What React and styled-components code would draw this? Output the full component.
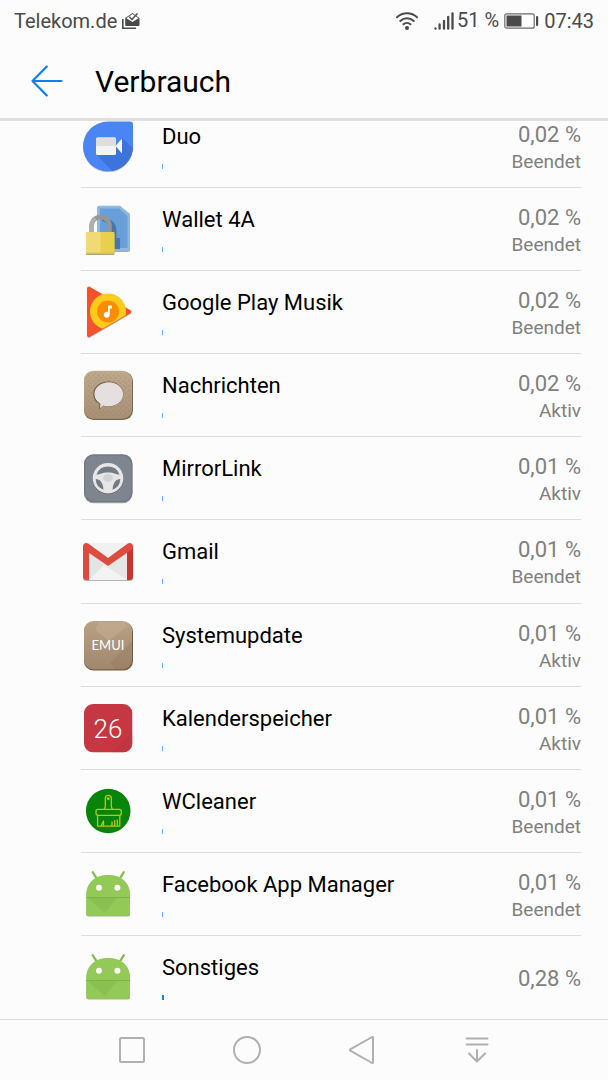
import React from 'react';
import styled, { createGlobalStyle } from 'styled-components';

const GlobalStyle = createGlobalStyle`
  * {
    box-sizing: border-box;
  }
  body {
    margin: 0;
    background: #fcfcfc;
    font-family: Roboto, 'Liberation Sans', sans-serif;
  }
`;

/* ---------- app icons ---------- */

const DuoIcon = () => (
  <AppIcon viewBox="0 0 52 52">
    <path d="M26 2.400H48a3 3 0 0 1 3 3V27a25 25 0 1 1-25-24.600z" fill="#c9cbd0" />
    <path d="M26 1.500H48a3 3 0 0 1 3 3V26.500a25 25 0 1 1-25-25z" fill="#4a86f3" />
    <path d="M14.500 34.500L30 51a25 25 0 0 0 21-23L39.500 17.500L34 30z" fill="#3c74dc" />
    <rect x="14" y="17.500" width="20" height="17.500" rx="1.500" fill="#f4f4f4" />
    <path d="M15.500 17.500h17a1.500 1.500 0 0 1 1.500 1.500v7H14v-7a1.500 1.500 0 0 1 1.500-1.500z" fill="#dedede" />
    <path d="M33.500 26l6.500-7.500v15z" fill="#f4f4f4" />
  </AppIcon>
);

const WalletIcon = () => (
  <AppIcon viewBox="0 0 52 52">
    <path d="M17 3.500h21.500L48 12v35a2 2 0 0 1-2 2H17a2 2 0 0 1-2-2V5.500a2 2 0 0 1 2-2z" fill="#a9a9a9" />
    <path d="M17 2.700h21L48 11v35a2 2 0 0 1-2 2H17a2 2 0 0 1-2-2V4.700a2 2 0 0 1 2-2z" fill="#8bb9e4" />
    <path d="M18 5.500h19L45.500 13v32H18z" fill="#689fd8" />
    <path d="M20 16c8-2 14.500 4 14.500 12v7H38v11H20z" fill="#4a76a5" />
    <path d="M20 18a6.500 6.500 0 0 1 6 6v5h-8V18z" fill="#689fd8" />
    <path d="M9.500 30v-7a9 9 0 0 1 18 0v7" fill="none" stroke="#969696" strokeWidth="4.500" />
    <path d="M9.500 29v-6a9 9 0 0 1 4-7.400" fill="none" stroke="#b0b0b0" strokeWidth="4" />
    <rect x="4" y="30" width="28.500" height="22" rx="1" fill="#aaa47e" />
    <rect x="4" y="29" width="28.500" height="22" rx="1" fill="#e8d04e" />
    <path d="M5 29h13.500v22H5a1 1 0 0 1-1-1V30a1 1 0 0 1 1-1z" fill="#f0da78" />
    <path d="M4 49.500h28.500v.7a1 1 0 0 1-1 .8H5a1 1 0 0 1-1-.8z" fill="#d9c162" />
  </AppIcon>
);

const PlayMusicIcon = () => (
  <AppIcon viewBox="0 0 52 52">
    <defs>
      <clipPath id="music-edge">
        <path d="M0 0H52V24.500L4.700 52z" />
      </clipPath>
    </defs>
    <path d="M5 3a2 2 0 0 1 3-1.600L48.500 25.500a1.800 1.800 0 0 1 0 2.500L8 51.600a2 2 0 0 1-3-1.600z" fill="#b9b4b2" />
    <path d="M5 2.500A2 2 0 0 1 8 .9L48.500 24.300a1.900 1.900 0 0 1 0 3L8 50.700a2 2 0 0 1-3-1.600z" fill="#f5512c" />
    <g clipPath="url(#music-edge)">
      <circle cx="26" cy="25.500" r="18" fill="#fdcb1b" />
    </g>
    <circle cx="26" cy="25.500" r="11" fill="#fb8c04" />
    <path d="M26 19.500h4v3h-2.200v6.200a3 3 0 1 1-1.800-2.700z" fill="#fff" />
  </AppIcon>
);

const MessagesIcon = () => (
  <AppIcon viewBox="0 0 52 52">
    <defs>
      <linearGradient id="leather" x1="0" y1="0" x2="0" y2="1">
        <stop offset="0" stopColor="#bfa98d" />
        <stop offset="1" stopColor="#a68f74" />
      </linearGradient>
      <pattern id="stitch" width="5" height="5" patternUnits="userSpaceOnUse">
        <path d="M1 1l1.500 1.500M4.500 3L3.500 4.500" stroke="#947c61" strokeWidth=".5" />
      </pattern>
    </defs>
    <rect x="2" y="2.500" width="49" height="48.500" rx="9.500" fill="#7d674f" />
    <rect x="2" y="1.800" width="48" height="48" rx="9.500" fill="url(#leather)" />
    <rect x="4" y="4" width="44" height="44" rx="7" fill="url(#stitch)" />
    <path d="M26.300 12.500c8.500 0 15 5.500 15 12.500s-6.500 12.500-15 12.500c-2 0-3.800-.3-5.400-.8L16.800 40.500l.8-5.300C13.500 33 11.300 29.300 11.300 25c0-7 6.500-12.500 15-12.500z" fill="#6d5945" />
    <path d="M26.800 13.300c8 0 14.300 5.200 14.300 12s-6.300 12-14.300 12c-2 0-3.900-.3-5.600-.9L18 39.300l.4-4.600c-3.800-2.200-6-5.500-6-9.400 0-6.800 6.400-12 14.400-12z" fill="#e5dfdf" />
  </AppIcon>
);

const MirrorLinkIcon = () => (
  <AppIcon viewBox="0 0 52 52">
    <rect x="2" y="3" width="48.500" height="48.300" rx="9.500" fill="#a6a8ab" />
    <rect x="2" y="2.300" width="48.500" height="48" rx="9.500" fill="#737982" />
    <rect x="3.500" y="3.800" width="45.500" height="45" rx="8" fill="#7f858e" />
    <circle cx="26" cy="27" r="15.300" fill="#555b63" />
    <circle cx="26" cy="26.300" r="15.300" fill="#e6e6e6" />
    <path d="M14.500 22.500a12.300 12.300 0 0 1 23 0c-3.500.2-4.500-2-11.500-2s-8 2.200-11.500 2z" fill="#747a83" />
    <path d="M13.700 27c4.300 0 7.300 3.500 7.800 10.800a12.200 12.200 0 0 1-7.800-10.800z" fill="#747a83" />
    <path d="M38.300 27c-4.300 0-7.300 3.500-7.800 10.800a12.200 12.200 0 0 0 7.800-10.800z" fill="#747a83" />
    <ellipse cx="26" cy="26" rx="5" ry="3.800" fill="#d2d2d2" />
  </AppIcon>
);

const GmailIcon = () => (
  <AppIcon viewBox="0 0 52 52">
    <rect x="1" y="9" width="50" height="37" rx="3" fill="#b5b5b5" />
    <rect x="1" y="8" width="50" height="37" rx="3" fill="#ececec" />
    <path d="M7 15v30l15-15z" fill="#e4e4e4" />
    <path d="M7 45l15-15 4 3 4-2 15 14z" fill="#f3f3f3" />
    <path d="M22 30l23 15V17L26 33z" fill="#e6e6e6" />
    <path d="M6 8h40L26 22.500z" fill="#f1f1f1" />
    <path d="M1 11h6v34H4a3 3 0 0 1-3-3z" fill="#dc4b3f" />
    <path d="M45 11h6v31a3 3 0 0 1-3 3h-3z" fill="#c5372d" />
    <path d="M1 11.500C1 8.300 4.200 7 6.500 8.800L26 23 45.500 8.800C47.800 7 51 8.300 51 11.500c0 1.700-.6 2.600-1.800 3.500L26 31 2.800 15C1.600 14.100 1 13.200 1 11.500z" fill="#dd4b40" />
  </AppIcon>
);

const EmuiIcon = () => (
  <AppIcon viewBox="0 0 52 52">
    <defs>
      <linearGradient id="bronze" x1="0" y1="0" x2="0" y2="1">
        <stop offset="0" stopColor="#b9a184" />
        <stop offset="1" stopColor="#a1886d" />
      </linearGradient>
    </defs>
    <rect x="2" y="3" width="49" height="48.500" rx="9.500" fill="#745b43" />
    <rect x="2" y="2" width="48" height="48.300" rx="9.500" fill="url(#bronze)" />
    <path d="M17 3l-4 8 14 11L45 7l-3-4z" fill="#c6b196" opacity=".5" />
    <path d="M50 22L28 44l5 6h9a8 8 0 0 0 8-8z" fill="#8e745b" opacity=".3" />
    <IconText x="26" y="31.300" $size={13} $weight={400} $family="Lato">
      EMUI
    </IconText>
  </AppIcon>
);

const CalendarIcon = () => (
  <AppIcon viewBox="0 0 52 52">
    <rect x="2" y="2" width="48.300" height="48.300" rx="9" fill="#c53742" />
    <path d="M50 30L30 50.300h12a8.300 8.300 0 0 0 8.300-8.300z" fill="#ba323d" opacity=".4" />
    <IconText x="26" y="35.600" $size={26} $weight={300} $family="Roboto">
      26
    </IconText>
  </AppIcon>
);

const CleanerIcon = () => (
  <AppIcon viewBox="0 0 52 52">
    <circle cx="26.200" cy="26" r="22.300" fill="#078409" />
    <g fill="none" stroke="#b9c80c" strokeWidth="1.300" strokeLinejoin="round">
      <path d="M23.300 21.500V13.300a3 3 0 0 1 6 0v8.200l1 2.800M23.300 21.500l-1 2.800" />
      <circle cx="26.300" cy="13.800" r=".8" />
      <rect x="14" y="24.300" width="25.300" height="6" rx="2" />
      <path d="M15.600 30.300v10.800h22.200V30.300M19 41l2.500-5v5M30 41v-4.500M32.700 41v-6M35.300 41v-6.500" />
    </g>
  </AppIcon>
);

const AndroidIcon = () => (
  <AppIcon viewBox="0 0 52 52">
    <path d="M10.800 4.300l4.700 7.500M41.700 4.300L37 11.800" stroke="#8abd55" strokeWidth="2.400" strokeLinecap="round" />
    <path d="M4.300 28C4.300 15 13.500 7.800 26.200 7.800S48 15 48 28v18.500a2 2 0 0 1-2 2H6.300a2 2 0 0 1-2-2z" fill="#a5b193" />
    <path d="M4.300 27C4.300 14.500 13.500 7 26.200 7S48 14.500 48 27v18.700a2 2 0 0 1-2 2H6.300a2 2 0 0 1-2-2z" fill="#93c957" />
    <path d="M5 29.500L23 45l12-15.500z" fill="#82b64b" opacity=".5" />
    <path d="M4.300 29.500H48" stroke="#7fb14a" strokeWidth="1.200" />
    <circle cx="17" cy="19.700" r="3" fill="#fafafa" />
    <circle cx="35.400" cy="19.700" r="3" fill="#fafafa" />
  </AppIcon>
);

const apps = [
  { name: 'Duo', Icon: DuoIcon, share: '0,02 %', state: 'Beendet' },
  { name: 'Wallet 4A', Icon: WalletIcon, share: '0,02 %', state: 'Beendet' },
  { name: 'Google Play Musik', Icon: PlayMusicIcon, share: '0,02 %', state: 'Beendet' },
  { name: 'Nachrichten', Icon: MessagesIcon, share: '0,02 %', state: 'Aktiv' },
  { name: 'MirrorLink', Icon: MirrorLinkIcon, share: '0,01 %', state: 'Aktiv' },
  { name: 'Gmail', Icon: GmailIcon, share: '0,01 %', state: 'Beendet' },
  { name: 'Systemupdate', Icon: EmuiIcon, share: '0,01 %', state: 'Aktiv' },
  { name: 'Kalenderspeicher', Icon: CalendarIcon, share: '0,01 %', state: 'Aktiv' },
  { name: 'WCleaner', Icon: CleanerIcon, share: '0,01 %', state: 'Beendet' },
  { name: 'Facebook App Manager', Icon: AndroidIcon, share: '0,01 %', state: 'Beendet' },
  { name: 'Sonstiges', Icon: AndroidIcon, share: '0,28 %', strong: true },
];

const StatusBar = () => (
  <Status>
    <Carrier>Telekom.de</Carrier>
    <svg width="18" height="18" viewBox="0 0 18 18">
      <path d="M.8 7v9.200H14" fill="none" stroke="#4a4a4a" strokeWidth="1.600" />
      <path d="M3.200 6l7.300-5 7 5v7a1 1 0 0 1-1 1H4.200a1 1 0 0 1-1-1z" fill="#4a4a4a" />
      <path d="M4.300 6.300l6.200-4.300 6 4.300-6 3.700z" fill="#fcfcfc" />
      <path d="M7.300 4.800l2.600 2.600L15.500 1.500" fill="none" stroke="#4a4a4a" strokeWidth="1.400" />
    </svg>
    <Spacer />
    <svg width="22" height="18" viewBox="0 0 22 18" fill="none" stroke="#4a4a4a" strokeWidth="2" strokeLinecap="round">
      <path d="M1 5.200a14.500 14.500 0 0 1 20 0M4.300 9a9.800 9.800 0 0 1 13.400 0M7.500 12.300a5.200 5.200 0 0 1 7 0" />
      <circle cx="11" cy="16" r="1" fill="#4a4a4a" />
    </svg>
    <Signal width="20" height="18" viewBox="0 0 20 18" stroke="#4a4a4a" strokeWidth="2.300" strokeLinecap="round">
      <path d="M1.500 16.300V16.700M5.600 12.500V16.700M10 9V16.700M14.200 5V16.700M18.500 1.300V16.700" />
    </Signal>
    <Charge>51 %</Charge>
    <svg width="35" height="16" viewBox="0 0 35 16">
      <rect x=".8" y=".8" width="29.400" height="14.400" rx="2" fill="none" stroke="#6a6a6a" strokeWidth="1.200" />
      <path d="M2.500 2.500h15v11h-15z" fill="#4a4a4a" />
      <rect x="32" y="3" width="2.200" height="10" rx="1" fill="#4a4a4a" />
    </svg>
    <Clock>07:43</Clock>
  </Status>
);

const App = () => (
  <Screen>
    <GlobalStyle />
    <StatusBar />
    <Header>
      <BackButton aria-label="Zurück">
        <svg width="32" height="32" viewBox="0 0 32 32" fill="none" stroke="#0a80f8" strokeWidth="2.200" strokeLinecap="round" strokeLinejoin="round">
          <path d="M15.800 1.500L1.500 16l14.300 14.500M1.500 16H30.500" />
        </svg>
      </BackButton>
      <Title>Verbrauch</Title>
    </Header>
    <Viewport>
      <List>
        {apps.map(({ name, Icon, share, state, strong }) => (
          <Row key={name}>
            <Icon />
            <Info>
              <Name>{name}</Name>
              <Bar $strong={strong} />
            </Info>
            <Usage>
              <Share>{share}</Share>
              {state && <State>{state}</State>}
            </Usage>
          </Row>
        ))}
      </List>
    </Viewport>
    <NavBar>
      <NavButton aria-label="Letzte Apps">
        <NavIcon viewBox="0 0 30 30">
          <rect x="3" y="3" width="24" height="24" rx="1" />
        </NavIcon>
      </NavButton>
      <NavButton aria-label="Startseite">
        <NavIcon viewBox="0 0 30 30">
          <circle cx="15" cy="15" r="13" />
        </NavIcon>
      </NavButton>
      <NavButton aria-label="Zurück">
        <NavIcon viewBox="0 0 30 30">
          <path d="M26 2.500V27.500a.6.600 0 0 1-.9.500L3.200 15.600a.7.700 0 0 1 0-1.200L25.100 2a.6.600 0 0 1 .9.500z" />
        </NavIcon>
      </NavButton>
      <NavButton aria-label="Benachrichtigungen">
        <NavIcon viewBox="0 0 30 30">
          <path d="M4.500 3.500h21M4.500 9.500h21M15 15v11.500M7 18.500l8 8 8-8" />
        </NavIcon>
      </NavButton>
    </NavBar>
  </Screen>
);

export default App;

const Screen = styled.div`
  display: flex;
  flex-direction: column;
  min-height: 100vh;
`;

const Status = styled.div`
  display: flex;
  align-items: center;
  height: 42px;
  padding: 0 14px;
  color: #4a4a4a;
  font-size: 20px;
  line-height: 24px;
`;

const Carrier = styled.span`
  margin-right: 5px;
`;

const Spacer = styled.span`
  flex: 1;
`;

const Signal = styled.svg`
  margin: 0 3px 0 16px;
`;

const Charge = styled.span`
  margin-right: 5px;
  padding-bottom: 2px;
`;

const Clock = styled.span`
  margin-left: 5px;
`;

const Header = styled.header`
  display: flex;
  align-items: center;
  height: 79px;
  padding: 2px 31px 0;
  border-bottom: 3px solid #e0e0e0;
`;

const BackButton = styled.button`
  display: flex;
  margin-right: 32px;
  padding: 0;
  border: 0;
  background: none;
  cursor: pointer;
`;

const Title = styled.h1`
  margin: 0;
  padding-top: 2px;
  font-size: 30px;
  font-weight: 400;
  line-height: 36px;
`;

const Viewport = styled.main`
  display: flex;
  flex: 1;
  overflow: hidden;
`;

/* the list is scrolled a little way under the header */
const List = styled.ul`
  display: grid;
  grid-auto-rows: minmax(83px, 1fr);
  flex: 1;
  margin: -16px 27px 0 81px;
  padding: 0;
  list-style: none;
`;

const Row = styled.li`
  display: flex;
  align-items: center;
  border-bottom: 1px solid #dcdcdc;

  &:last-child {
    border-bottom: 0;
  }
`;

const AppIcon = styled.svg`
  width: 52px;
  height: 52px;
  margin: 0 28px 0 1px;
`;

const IconText = styled.text`
  fill: #fff;
  font-family: ${props => props.$family}, sans-serif;
  font-size: ${props => props.$size}px;
  font-weight: ${props => props.$weight};
  text-anchor: middle;
`;

const Info = styled.div`
  flex: 1;
`;

const Name = styled.div`
  margin-bottom: 13px;
  color: #000;
  font-size: 22px;
  line-height: 28px;
`;

const Bar = styled.div`
  width: ${props => (props.$strong ? 2 : 1)}px;
  height: 5px;
  background: ${props => (props.$strong ? '#0a84ff' : '#62b2ff')};
`;

const Usage = styled.div`
  padding-top: 4px;
  color: #808080;
  text-align: right;
`;

const Share = styled.div`
  font-size: 22px;
  line-height: 28px;
`;

const State = styled.div`
  font-size: 19px;
  line-height: 26px;
`;

const NavBar = styled.nav`
  display: grid;
  grid-template-columns: repeat(4, 1fr);
  height: 61px;
  padding: 0 74px;
  border-top: 1px solid #dcdcdc;
`;

const NavButton = styled.button`
  display: flex;
  align-items: center;
  justify-content: center;
  padding: 0;
  border: 0;
  background: none;
  cursor: pointer;
`;

const NavIcon = styled.svg`
  width: 30px;
  height: 30px;
  fill: none;
  stroke: #b0b0b0;
  stroke-width: 2;
  stroke-linecap: round;
  stroke-linejoin: round;
`;
